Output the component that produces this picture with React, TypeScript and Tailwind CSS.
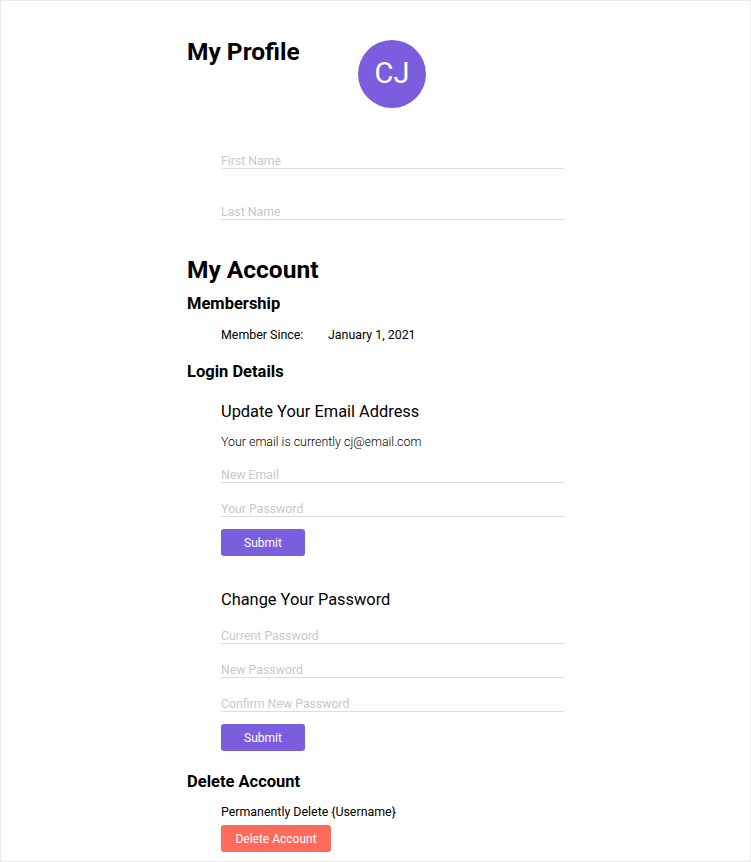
export default function App() {
  const font = { fontFamily: 'Roboto, "Noto Sans", sans-serif' };

  const Field = ({ placeholder, className = '' }: { placeholder: string; className?: string }) => (
    <input
      type="text"
      placeholder={placeholder}
      className={`block h-[18px] w-[343px] border-b border-[#dddddd] bg-transparent px-0 pt-[4px] pb-0 text-[12.3px] text-gray-800 outline-none placeholder:text-[#c9c9c9] ${className}`}
    />
  );

  return (
    <div className="min-h-[862px] bg-[#ececec] pt-px pl-px pr-[1px] pb-px" style={font}>
      <div className="h-[860px] rounded-[3px] bg-white pl-[186px] text-black">
        {/* Profile */}
        <div className="flex items-start pt-[37px]">
          <h1 className="w-[171px] text-[24.5px] font-bold leading-[28px]">My Profile</h1>
          <div className="mt-[2px] flex h-[68px] w-[68px] items-center justify-center rounded-full bg-[#7b5ede] text-[29px] text-white">
            CJ
          </div>
        </div>

        <div className="pl-[34px]">
          <Field placeholder="First Name" className="mt-[43px]" />
          <Field placeholder="Last Name" className="mt-[33px]" />
        </div>

        {/* Account */}
        <h1 className="mt-[36px] text-[24.5px] font-bold leading-[28px]">My Account</h1>
        <h2 className="mt-[10px] text-[16.5px] font-bold leading-[20px]">Membership</h2>
        <div className="mt-[13px] flex pl-[34px] text-[12.4px] leading-[16px]">
          <span className="w-[107px]">Member Since:</span>
          <span>January 1, 2021</span>
        </div>

        <h2 className="mt-[19px] text-[16.5px] font-bold leading-[20px]">Login Details</h2>

        <div className="pl-[34px]">
          <h3 className="mt-[20px] text-[16.4px] leading-[20px]">Update Your Email Address</h3>
          <p className="mt-[12px] text-[12.4px] font-light leading-[16px]">Your email is currently cj@email.com</p>
          <Field placeholder="New Email" className="mt-[15px]" />
          <Field placeholder="Your Password" className="mt-[16px]" />
          <button className="mt-[12px] h-[27px] w-[84px] rounded-[3px] bg-[#7b5ede] text-[12px] text-white">
            Submit
          </button>

          <h3 className="mt-[34px] text-[16.4px] leading-[20px]">Change Your Password</h3>
          <Field placeholder="Current Password" className="mt-[16px]" />
          <Field placeholder="New Password" className="mt-[16px]" />
          <Field placeholder="Confirm New Password" className="mt-[16px]" />
          <button className="mt-[12px] h-[27px] w-[84px] rounded-[3px] bg-[#7b5ede] text-[12px] text-white">
            Submit
          </button>
        </div>

        <h2 className="mt-[21px] text-[16.5px] font-bold leading-[20px]">Delete Account</h2>
        <div className="pl-[34px]">
          <p className="mt-[12px] text-[12.4px] leading-[16px]">Permanently Delete {'{Username}'}</p>
          <button className="mt-[5px] h-[27px] w-[110px] rounded-[3px] bg-[#ff6b5b] text-[12px] text-white">
            Delete Account
          </button>
        </div>
      </div>
    </div>
  );
}
